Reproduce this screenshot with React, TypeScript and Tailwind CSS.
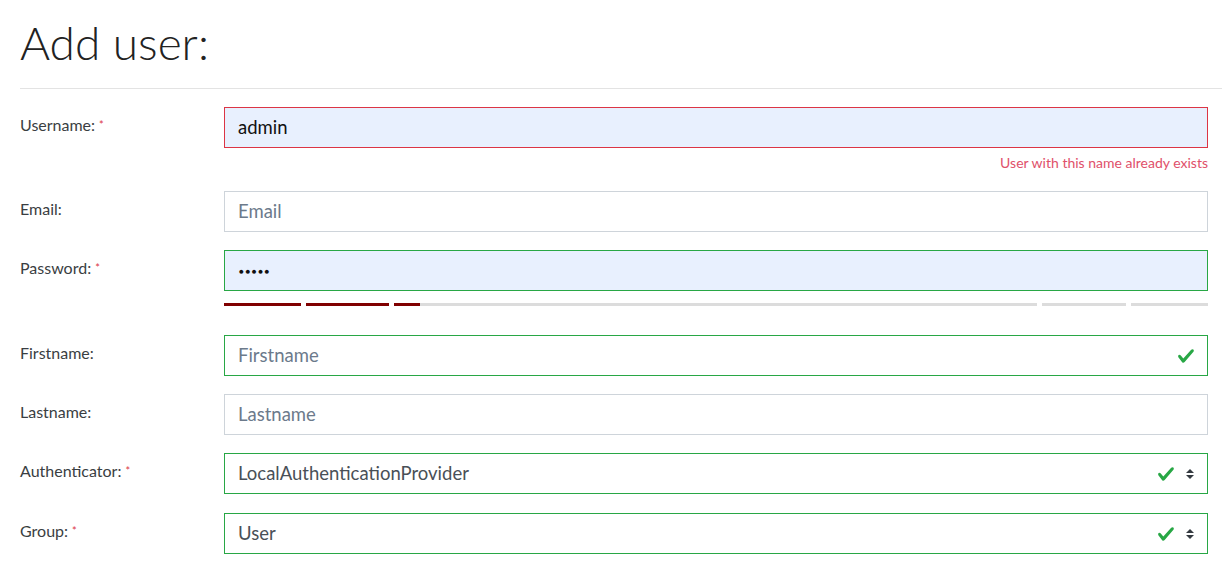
import type { ReactNode } from 'react'

const font = { fontFamily: 'Lato, "Open Sans", sans-serif' }

function Check() {
  return (
    <svg viewBox="0 0 8 8" className="w-[18px] h-[18px]" aria-hidden="true">
      <path
        fill="#28a745"
        d="M2.3 6.73L.6 4.53c-.4-1.04.46-1.4 1.1-.8l1.1 1.4 3.4-3.8c.6-.63 1.6-.27 1.2.7l-4 4.6c-.43.5-.8.4-1.1.1z"
      />
    </svg>
  )
}

function Arrows() {
  return (
    <svg viewBox="0 0 4 5" className="w-[8px] h-[10px]" aria-hidden="true">
      <path fill="#343a40" d="M2 0L0 2h4zm0 5L0 3h4z" />
    </svg>
  )
}

function Label({ text, required }: { text: string; required?: boolean }) {
  return (
    <div className="w-[204px] shrink-0 pt-[7px] text-[16px] leading-[21px] text-[#3a3e42]">
      {text}
      {required && <span className="ml-[4px] align-top text-[11px] text-[#dc3545]">*</span>}
    </div>
  )
}

function Box({
  border,
  filled,
  children,
}: {
  border: string
  filled?: boolean
  children: ReactNode
}) {
  return (
    <div
      className={`flex h-[41px] items-center border pl-[13px] pr-[12px] text-[18.5px] ${border} ${
        filled ? 'bg-[#e8f0fe]' : 'bg-white'
      }`}
    >
      {children}
    </div>
  )
}

export default function App() {
  const segments = [
    { w: 'w-[77px]', fill: 'w-full' },
    { w: 'w-[83px]', fill: 'w-full' },
    { w: 'flex-1', fill: 'w-[26px]' },
    { w: 'w-[84px]', fill: 'w-0' },
    { w: 'w-[77px]', fill: 'w-0' },
  ]

  return (
    <div className="min-h-[576px] bg-white pl-[20px]" style={font}>
      <h1 className="pt-[15px] pb-[18px] text-[46px] font-light leading-[55px] text-[#222]">Add user:</h1>
      <hr className="border-t border-[#e3e3e3]" />

      <div className="pr-[14px] pt-[18px]">
        <div className="mb-[18px] flex">
          <Label text="Username:" required />
          <div className="flex-1">
            <Box border="border-[#dc3545]" filled>
              <span className="text-[#111]">admin</span>
            </Box>
            <div className="mt-[5px] text-right text-[14px] leading-[20px] text-[#e0506a]">
              User with this name already exists
            </div>
          </div>
        </div>

        <div className="mb-[18px] flex">
          <Label text="Email:" />
          <div className="flex-1">
            <Box border="border-[#ced4da]">
              <span className="text-[#6c7a8b]">Email</span>
            </Box>
          </div>
        </div>

        <div className="mb-[29px] flex">
          <Label text="Password:" required />
          <div className="flex-1">
            <Box border="border-[#28a745]" filled>
              <span className="pl-[1px] text-[8px] tracking-[1.6px] text-[#111]">●●●●●</span>
            </Box>
            <div className="mt-[12px] flex h-[3px] gap-[5px]">
              {segments.map((s, i) => (
                <div key={i} className={`${s.w} h-full bg-[#dcdcdc]`}>
                  <div className={`${s.fill} h-full bg-[#800000]`} />
                </div>
              ))}
            </div>
          </div>
        </div>

        <div className="mb-[18px] flex">
          <Label text="Firstname:" />
          <div className="flex-1">
            <Box border="border-[#28a745]">
              <span className="flex-1 text-[#6c7a8b]">Firstname</span>
              <Check />
            </Box>
          </div>
        </div>

        <div className="mb-[18px] flex">
          <Label text="Lastname:" />
          <div className="flex-1">
            <Box border="border-[#ced4da]">
              <span className="text-[#6c7a8b]">Lastname</span>
            </Box>
          </div>
        </div>

        <div className="mb-[19px] flex">
          <Label text="Authenticator:" required />
          <div className="flex-1">
            <Box border="border-[#28a745]">
              <span className="flex-1 text-[#495057]">LocalAuthenticationProvider</span>
              <Check />
              <span className="ml-[11px] mr-[1px] flex">
                <Arrows />
              </span>
            </Box>
          </div>
        </div>

        <div className="flex">
          <Label text="Group:" required />
          <div className="flex-1">
            <Box border="border-[#28a745]">
              <span className="flex-1 text-[#495057]">User</span>
              <Check />
              <span className="ml-[11px] mr-[1px] flex">
                <Arrows />
              </span>
            </Box>
          </div>
        </div>
      </div>
    </div>
  )
}
